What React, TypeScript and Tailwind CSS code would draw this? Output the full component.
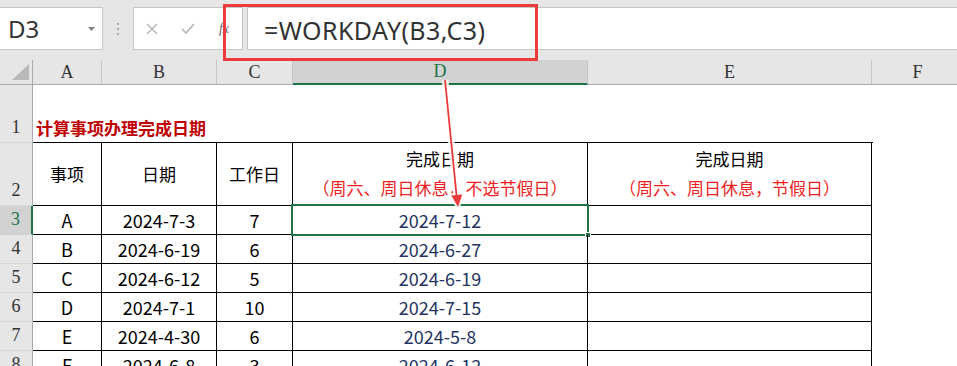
import React from "react";

const rows = [
  { n: 3, a: "A", b: "2024-7-3", c: "7", d: "2024-7-12" },
  { n: 4, a: "B", b: "2024-6-19", c: "6", d: "2024-6-27" },
  { n: 5, a: "C", b: "2024-6-12", c: "5", d: "2024-6-19" },
  { n: 6, a: "D", b: "2024-7-1", c: "10", d: "2024-7-15" },
  { n: 7, a: "E", b: "2024-4-30", c: "6", d: "2024-5-8" },
  { n: 8, a: "F", b: "2024-6-8", c: "3", d: "2024-6-12" },
];

const cjk = "font-['Noto_Sans_CJK_SC','Noto_Sans',sans-serif]";
const hdrFont = "font-['Liberation_Serif',serif] text-[18px]";

function RowHead({ n, active, h }: { n: number; active?: boolean; h: string }) {
  return (
    <div
      className={`${h} w-[33px] shrink-0 flex items-end justify-center border-b ${
        active
          ? "bg-[#d2d2d2] border-r-2 border-r-[#217346] text-[#217346] border-b-[#d2d2d2]"
          : "bg-[#e6e6e6] border-r border-r-[#ababab] text-[#333] border-b-[#d6d6d6]"
      }`}
    >
      <div className={`h-[29px] flex items-center ${hdrFont}`}>{n}</div>
    </div>
  );
}

export default function App() {
  return (
    <div className="relative w-[957px] h-[366px] overflow-hidden bg-[#e6e6e6]">
      {/* Formula bar */}
      <div className="h-[60px] pt-[7px] flex items-start">
        <div className="w-[103px] h-[43px] shrink-0 bg-white border-y border-r border-[#c6c6c6] flex items-center justify-between pl-[8px] pr-[7px]">
          <span className="text-[24px] leading-none text-[#333] font-['Noto_Sans',sans-serif]">D3</span>
          <svg width="7" height="4" viewBox="0 0 7 4">
            <path d="M0 0 L7 0 L3.5 4 Z" fill="#808080" />
          </svg>
        </div>
        <div className="w-[30px] h-[43px] shrink-0 flex flex-col items-center justify-center gap-[3px]">
          <div className="w-[2px] h-[2px] bg-[#a8a8a8]" />
          <div className="w-[2px] h-[2px] bg-[#a8a8a8]" />
          <div className="w-[2px] h-[2px] bg-[#a8a8a8]" />
        </div>
        <div className="w-[110px] h-[43px] shrink-0 bg-white border border-[#c6c6c6] flex items-center">
          <div className="w-[36px] flex justify-center">
            <svg width="12" height="12" viewBox="0 0 12 12">
              <path d="M1 1 L11 11 M11 1 L1 11" stroke="#b5b5b5" strokeWidth="1.4" />
            </svg>
          </div>
          <div className="w-[36px] flex justify-center">
            <svg width="14" height="11" viewBox="0 0 14 11">
              <path d="M1 6 L5 10 L13 1" stroke="#b5b5b5" strokeWidth="1.6" fill="none" />
            </svg>
          </div>
          <div className="w-[36px] flex justify-center">
            <span className="italic font-['Liberation_Serif',serif] text-[14px] text-[#666]">fx</span>
          </div>
        </div>
        <div className="ml-[4px] flex-1 h-[43px] bg-white border-y border-l border-[#c6c6c6] flex items-center pl-[16px]">
          <span className="text-[25px] leading-none tracking-[0.4px] text-[#333] font-['Noto_Sans',sans-serif] pt-[3px]">=WORKDAY(B3,C3)</span>
        </div>
      </div>

      {/* Column headers */}
      <div className={`flex h-[25px] text-[#333] ${hdrFont}`}>
        <div className="w-[33px] shrink-0 border-r border-b border-[#ababab] flex items-end justify-end pr-[3px] pb-[4px]">
          <svg width="17" height="16" viewBox="0 0 17 16">
            <path d="M17 0 L17 16 L0 16 Z" fill="#b9b9b9" />
          </svg>
        </div>
        <div className="w-[69px] shrink-0 border-r border-r-[#c6c6c6] border-b border-b-[#ababab] flex items-center justify-center">A</div>
        <div className="w-[115px] shrink-0 border-r border-r-[#c6c6c6] border-b border-b-[#ababab] flex items-center justify-center">B</div>
        <div className="w-[76px] shrink-0 border-r border-r-[#c6c6c6] border-b border-b-[#ababab] flex items-center justify-center">C</div>
        <div className="w-[295px] shrink-0 bg-[#d2d2d2] border-r border-r-[#c6c6c6] border-b-2 border-b-[#217346] flex items-center justify-center text-[#217346]">D</div>
        <div className="w-[284px] shrink-0 border-r border-r-[#c6c6c6] border-b border-b-[#ababab] flex items-center justify-center">E</div>
        <div className="w-[92px] shrink-0 border-r border-r-[#c6c6c6] border-b border-b-[#ababab] flex items-center justify-center">F</div>
      </div>

      {/* Row 1 */}
      <div className="flex h-[58px] bg-white">
        <RowHead n={1} h="h-[58px]" />
        <div className="w-[69px] shrink-0 border-b border-black flex items-end pb-[4px] pl-[3px]">
          <span className={`whitespace-nowrap font-bold text-[17px] leading-[20px] text-[#c00000] ${cjk}`}>
            计算事项办理完成日期
          </span>
        </div>
        <div className="w-[115px] shrink-0 border-b border-black" />
        <div className="w-[76px] shrink-0 border-b border-black" />
        <div className="w-[295px] shrink-0 border-b border-black" />
        <div className="w-[285px] shrink-0 border-b border-black" />
        <div className="flex-1" />
      </div>

      {/* Row 2 */}
      <div className={`flex h-[63px] bg-white text-[17px] text-black ${cjk}`}>
        <RowHead n={2} h="h-[63px]" />
        <div className="w-[69px] shrink-0 border-r border-b border-black flex items-center justify-center">事项</div>
        <div className="w-[115px] shrink-0 border-r border-b border-black flex items-center justify-center">日期</div>
        <div className="w-[76px] shrink-0 border-r border-b border-black flex items-center justify-center">工作日</div>
        <div className="w-[295px] shrink-0 border-r border-b border-black flex flex-col items-center justify-center pb-[3px] leading-[29px]">
          <div>完成日期</div>
          <div className="text-[#f01e1e] whitespace-nowrap">（周六、周日休息，不选节假日）</div>
        </div>
        <div className="w-[284px] shrink-0 border-r border-b border-black flex flex-col items-center justify-center pb-[3px] leading-[29px]">
          <div>完成日期</div>
          <div className="text-[#f01e1e] whitespace-nowrap">（周六、周日休息，节假日）</div>
        </div>
        <div className="flex-1" />
      </div>

      {/* Data rows */}
      {rows.map((r) => (
        <div key={r.n} className={`flex h-[29px] bg-white text-[18px] text-black ${cjk}`}>
          <RowHead n={r.n} h="h-[29px]" active={r.n === 3} />
          <div className="w-[69px] shrink-0 border-r border-b border-black flex items-center justify-center">{r.a}</div>
          <div className="w-[115px] shrink-0 border-r border-b border-black flex items-center justify-center">{r.b}</div>
          <div className="w-[76px] shrink-0 border-r border-b border-black flex items-center justify-center">{r.c}</div>
          <div className="relative w-[295px] shrink-0 border-r border-b border-black flex items-center justify-center text-[#1f3461]">
            {r.d}
            {r.n === 3 && (
              <div className="absolute -left-[2px] -top-[2px] w-[298px] h-[32px] border-2 border-[#217346]">
                <div className="absolute -right-[4px] -bottom-[4px] w-[6px] h-[6px] bg-[#217346] border border-white" />
              </div>
            )}
          </div>
          <div className="w-[284px] shrink-0 border-r border-b border-black" />
          <div className="flex-1" />
        </div>
      ))}

      {/* Red annotation box */}
      <div className="absolute left-[223px] top-[4px] w-[315px] h-[57px] border-[3px] border-[#ec3b3b] pointer-events-none" />

      {/* Arrow */}
      <svg className="absolute left-0 top-0 pointer-events-none" width="957" height="366" viewBox="0 0 957 366">
        <line x1="445" y1="80" x2="456.6" y2="196" stroke="white" strokeWidth="7" strokeOpacity="0.85" />
        <polygon points="458,207 462.3,194.6 451.3,195.6" fill="white" stroke="white" strokeWidth="4" strokeOpacity="0.85" />
        <line x1="445" y1="80" x2="456.6" y2="196" stroke="#ec3b3b" strokeWidth="1.8" />
        <polygon points="458,207 462.3,194.6 451.3,195.6" fill="#ec3b3b" />
      </svg>
    </div>
  );
}
